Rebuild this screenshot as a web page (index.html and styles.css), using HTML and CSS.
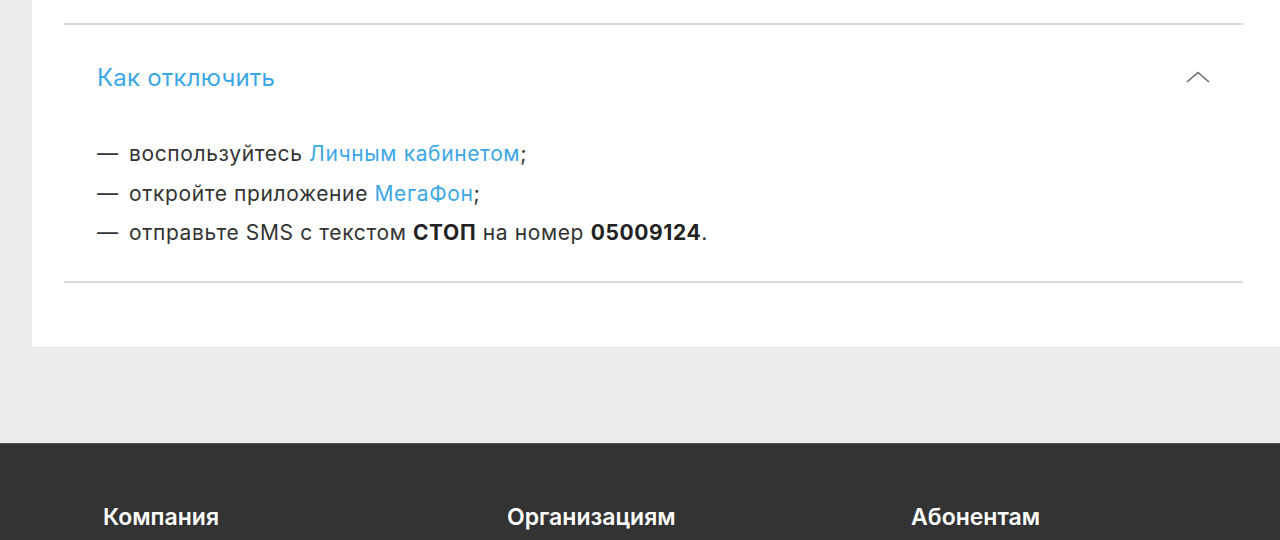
FILE: index.html
```html
<!DOCTYPE html>
<html lang="ru">
<head>
<meta charset="utf-8">
<title>Как отключить</title>
<link rel="stylesheet" href="styles.css">
</head>
<body>
<main class="card">
  <section class="accordion">
    <div class="acc-head">
      <h2 class="acc-title">Как отключить</h2>
      <svg class="chevron" width="24" height="12" viewBox="0 0 24 12" aria-hidden="true">
        <path d="M1 11 L12 1.5 L23 11" fill="none" stroke="#6b6b6b" stroke-width="1.6"/>
      </svg>
    </div>
    <ul class="acc-list">
      <li><span class="dash">—</span><span>воспользуйтесь <a href="#" class="link">Личным кабинетом</a>;</span></li>
      <li><span class="dash">—</span><span>откройте приложение <a href="#" class="link">МегаФон</a>;</span></li>
      <li><span class="dash">—</span><span>отправьте SMS с текстом <b>СТОП</b> на номер <b>05009124</b>.</span></li>
    </ul>
  </section>
</main>
<footer class="footer">
  <div class="footer-col">Компания</div>
  <div class="footer-col">Организациям</div>
  <div class="footer-col">Абонентам</div>
</footer>
</body>
</html>
```
FILE: styles.css
```css
* { box-sizing: border-box; }
html, body { margin: 0; padding: 0; }
body {
  background: #ececec;
  font-family: Inter, "Noto Sans", "DejaVu Sans", sans-serif;
  color: #333;
  height: 540px;
  overflow: hidden;
}
.card {
  margin-left: 32px;
  background: #fff;
  padding: 23px 37px 64px 32px;
  border-bottom: 1px solid #e4e4e4;
}
.accordion {
  border-top: 2px solid #dcdcdc;
  border-bottom: 2px solid #dcdcdc;
  padding: 0 0 28px 33px;
}
.acc-head {
  display: flex;
  align-items: center;
  justify-content: space-between;
  padding: 37px 33px 0 0;
}
.acc-title {
  margin: 0;
  font-weight: 400;
  font-size: 24px;
  line-height: 32px;
  color: #3ba7e6;
  letter-spacing: 0.2px;
}
.chevron { display: block; margin-top: -2px; }
.acc-list {
  list-style: none;
  margin: 40px 0 0 0;
  padding: 0;
  font-size: 21px;
  letter-spacing: 0.62px;
  line-height: 39.5px;
  color: #333;
}
.acc-list li { display: flex; }
.dash { width: 32px; flex: none; letter-spacing: 0; }
.link { color: #3ba7e6; text-decoration: none; }
.acc-list b { font-weight: 700; color: #222; }
.footer {
  margin-top: 95px;
  background: #333;
  border-top: 1px solid #555;
  display: flex;
  padding: 59px 0 0 103px;
  height: 200px;
}
.footer-col {
  flex: none;
  width: 404px;
  font-size: 23px;
  line-height: 28px;
  font-weight: 600;
  color: #fff;
}
```
